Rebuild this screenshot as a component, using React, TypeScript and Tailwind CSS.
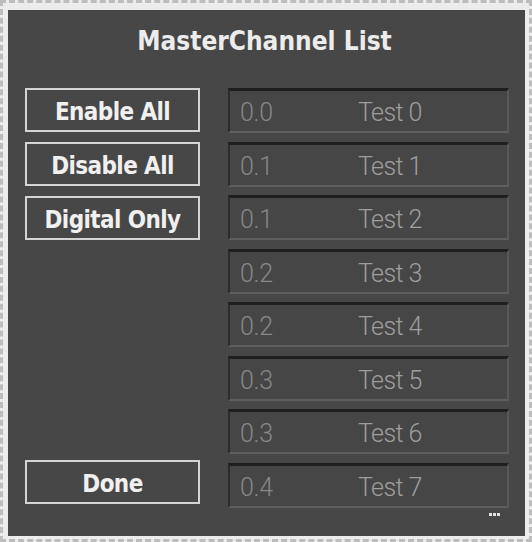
import React from "react";

const rows = [
  ["0.0", "Test 0"],
  ["0.1", "Test 1"],
  ["0.1", "Test 2"],
  ["0.2", "Test 3"],
  ["0.2", "Test 4"],
  ["0.3", "Test 5"],
  ["0.3", "Test 6"],
  ["0.4", "Test 7"],
];

function Btn({ label }: { label: string }) {
  return (
    <div className="h-[44px] w-[175px] border-2 border-[#d4d4d4] flex items-center justify-center pt-[3px] text-[#f0f0f0] text-[24px] font-bold tracking-[-0.6px]">
      {label}
    </div>
  );
}

export default function App() {
  return (
    <div
      className="w-[532px] h-[542px] bg-[#ececec] border-[3px] border-dashed border-[#bdbdbd] pt-[7px] pl-[5px] pr-[4px] pb-[3px]"
      style={{ fontFamily: '"DejaVu Sans Condensed", "DejaVu Sans", sans-serif' }}
    >
      <div className="w-[517px] h-[526px] bg-[#474747] relative flex flex-col">
        <div className="h-[60px] flex items-center justify-center pt-[2px] pr-[4px] text-[#ececec] text-[26px] font-semibold tracking-[0px]">
          MasterChannel List
        </div>
        <div className="flex pl-[17px] pt-[18px]">
          <div className="w-[175px] flex flex-col h-[417px]">
            <div className="flex flex-col gap-[10px]">
              <Btn label="Enable All" />
              <Btn label="Disable All" />
              <Btn label="Digital Only" />
            </div>
            <div className="flex-1" />
            <div className="mb-[1px]">
              <Btn label="Done" />
            </div>
          </div>
          <div className="ml-[28px] w-[281px] flex flex-col gap-[8.5px]">
            {rows.map(([n, t], i) => (
              <div
                key={i}
                className="h-[45px] bg-[#464646] border-t-[3px] border-l-2 border-b-2 border-r-2 border-t-[#1f1f1f] border-l-[#2b2b2b] border-b-[#5e5e5e] border-r-[#585858] flex items-center pt-[4px] text-[25px] font-light"
                style={{ fontFamily: 'Roboto, "DejaVu Sans", sans-serif' }}
              >
                <span className="w-[128px] pl-[10px] text-[#888888] tracking-[-0.3px]">{n}</span>
                <span className="text-[#9e9e9e] tracking-[-0.6px]">{t}</span>
              </div>
            ))}
          </div>
        </div>
        <div className="absolute right-[25px] bottom-[20px] flex gap-[1px]">
          <div className="w-[3px] h-[3px] bg-[#e0e0e0]" />
          <div className="w-[3px] h-[3px] bg-[#e0e0e0]" />
          <div className="w-[3px] h-[3px] bg-[#e0e0e0]" />
        </div>
      </div>
    </div>
  );
}
